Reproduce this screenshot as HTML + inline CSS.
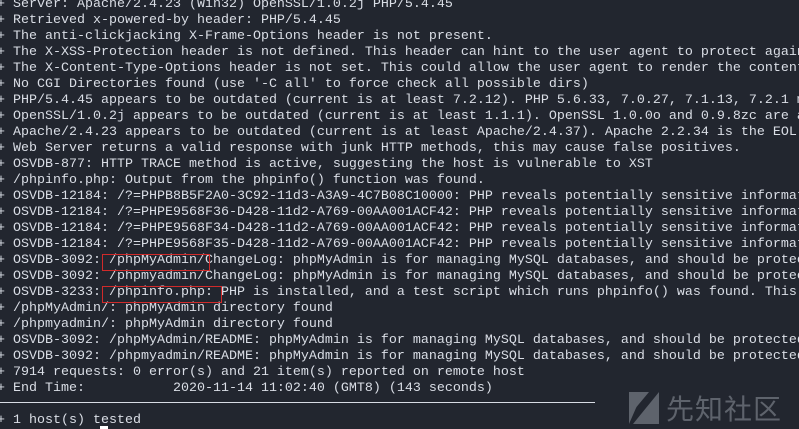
<!DOCTYPE html><html><head><style>
body{margin:0;width:799px;height:429px;overflow:hidden;background:#22262f;}
pre{position:absolute;left:-3px;top:-3px;margin:0;font-family:"Liberation Mono",monospace;font-size:13.33px;line-height:16px;color:#dadee6;white-space:pre;}
.box{position:absolute;border:1px solid #d02a2a;}
</style></head><body>
<pre>+ Server: Apache/2.4.23 (Win32) OpenSSL/1.0.2j PHP/5.4.45
+ Retrieved x-powered-by header: PHP/5.4.45
+ The anti-clickjacking X-Frame-Options header is not present.
+ The X-XSS-Protection header is not defined. This header can hint to the user agent to protect against
+ The X-Content-Type-Options header is not set. This could allow the user agent to render the content
+ No CGI Directories found (use '-C all' to force check all possible dirs)
+ PHP/5.4.45 appears to be outdated (current is at least 7.2.12). PHP 5.6.33, 7.0.27, 7.1.13, 7.2.1 may
+ OpenSSL/1.0.2j appears to be outdated (current is at least 1.1.1). OpenSSL 1.0.0o and 0.9.8zc are also
+ Apache/2.4.23 appears to be outdated (current is at least Apache/2.4.37). Apache 2.2.34 is the EOL for
+ Web Server returns a valid response with junk HTTP methods, this may cause false positives.
+ OSVDB-877: HTTP TRACE method is active, suggesting the host is vulnerable to XST
+ /phpinfo.php: Output from the phpinfo() function was found.
+ OSVDB-12184: /?=PHPB8B5F2A0-3C92-11d3-A3A9-4C7B08C10000: PHP reveals potentially sensitive information
+ OSVDB-12184: /?=PHPE9568F36-D428-11d2-A769-00AA001ACF42: PHP reveals potentially sensitive information
+ OSVDB-12184: /?=PHPE9568F34-D428-11d2-A769-00AA001ACF42: PHP reveals potentially sensitive information
+ OSVDB-12184: /?=PHPE9568F35-D428-11d2-A769-00AA001ACF42: PHP reveals potentially sensitive information
+ OSVDB-3092: /phpMyAdmin/ChangeLog: phpMyAdmin is for managing MySQL databases, and should be protected
+ OSVDB-3092: /phpmyadmin/ChangeLog: phpMyAdmin is for managing MySQL databases, and should be protected
+ OSVDB-3233: /phpinfo.php: PHP is installed, and a test script which runs phpinfo() was found. This
+ /phpMyAdmin/: phpMyAdmin directory found
+ /phpmyadmin/: phpMyAdmin directory found
+ OSVDB-3092: /phpMyAdmin/README: phpMyAdmin is for managing MySQL databases, and should be protected
+ OSVDB-3092: /phpmyadmin/README: phpMyAdmin is for managing MySQL databases, and should be protected
+ 7914 requests: 0 error(s) and 21 item(s) reported on remote host
+ End Time:           2020-11-14 11:02:40 (GMT8) (143 seconds)

+ 1 host(s) tested</pre>
<div style="position:absolute;left:0;top:402px;width:595px;height:1px;background:#d8dce4"></div>
<div class="box" style="left:102px;top:254px;width:106px;height:15px"></div>
<div class="box" style="left:102px;top:286px;width:118px;height:15px"></div>
<div style="position:absolute;left:100px;top:426px;width:8px;height:3px;background:#fff"></div>
<svg style="position:absolute;left:627px;top:390px" width="34" height="36"><polygon points="2,34 2,18 16,2 16,2" fill="#5e636c"/><polygon points="6,34 32,2 32,34" fill="#5e636c"/><polygon points="2,2 22,2 2,26" fill="#5e636c"/></svg>
<div style="position:absolute;left:666px;top:391px;font-family:'Noto Sans CJK SC',sans-serif;font-size:28px;line-height:34px;color:#5e636c;letter-spacing:1px">先知社区</div>
</body></html>
